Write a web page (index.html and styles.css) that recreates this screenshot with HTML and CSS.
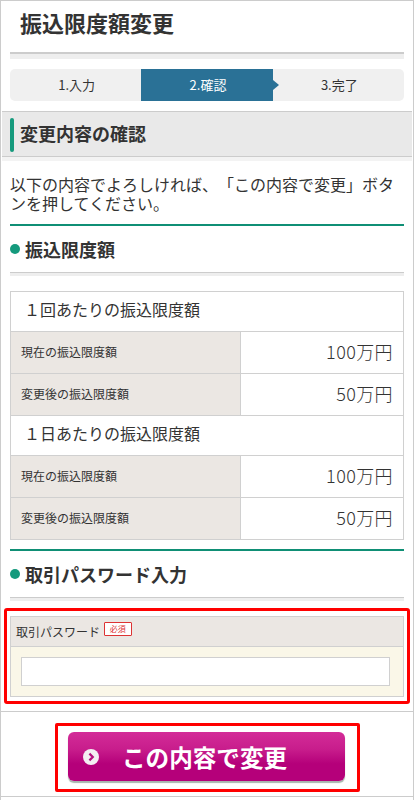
FILE: index.html
```html
<!DOCTYPE html>
<html lang="ja">

<head>
    <meta charset="UTF-8">
    <meta name="viewport" content="width=device-width, initial-scale=1.0">
    <title>振込限度額変更</title>
    <link rel="stylesheet" href="styles.css">
</head>

<body>
    <div class="cont">
        <h1 class="title">振込限度額変更</h1>
        <div class="rule rule-top"></div>

        <div class="steps">
            <div class="step">1.入力</div>
            <div class="step step-on">2.確認</div>
            <div class="step">3.完了</div>
        </div>

        <h2 class="band"><span class="band-bar"></span><span class="band-text">変更内容の確認</span></h2>

        <p class="lead">以下の内容でよろしければ、「この内容で変更」ボタンを押してください。</p>

        <div class="green"></div>
        <h3 class="head"><span class="dot"></span>振込限度額</h3>
        <div class="rule"></div>

        <div class="tabla">
            <div class="tabla-title">１回あたりの振込限度額</div>
            <div class="fila">
                <div class="tabla-label">現在の振込限度額</div>
                <div class="tabla-value">100万円</div>
            </div>
            <div class="fila">
                <div class="tabla-label">変更後の振込限度額</div>
                <div class="tabla-value">50万円</div>
            </div>
            <div class="tabla-title tabla-title-2">１日あたりの振込限度額</div>
            <div class="fila">
                <div class="tabla-label">現在の振込限度額</div>
                <div class="tabla-value">100万円</div>
            </div>
            <div class="fila">
                <div class="tabla-label">変更後の振込限度額</div>
                <div class="tabla-value">50万円</div>
            </div>
        </div>

        <div class="green green-2"></div>
        <h3 class="head"><span class="dot"></span>取引パスワード入力</h3>
        <div class="rule"></div>

        <div class="redbox">
            <div class="form">
                <div class="form-head">
                    <label for="pass">取引パスワード</label>
                    <span class="must">必須</span>
                </div>
                <div class="form-body">
                    <input id="pass" class="input" type="password">
                </div>
            </div>
        </div>

        <div class="foot">
            <div class="redbox-btn">
                <button class="boton">
                    <svg class="boton-icon" viewBox="0 0 16 16" width="16" height="16">
                        <circle cx="8" cy="8" r="8" fill="#f4eef2" />
                        <path d="M6.4 4.6 L9.8 8 L6.4 11.4" fill="none" stroke="#b5107f" stroke-width="2.2" />
                    </svg>
                    <span>この内容で変更</span>
                </button>
            </div>
        </div>
    </div>
</body>

</html>
```

FILE: styles.css
```css
* {
    box-sizing: border-box;
}

html,
body {
    margin: 0;
    height: 800px;
    overflow: hidden;
}

body {
    background: white;
    color: #333;
    font-family: "Noto Sans CJK JP", "Noto Sans", sans-serif;
    text-spacing-trim: space-all;
}

.cont {
    height: 800px;
    padding: 0 1px;
    border: 1px solid #ccc;
    border-bottom: 0;
}

.title {
    margin: 0 0 0 18px;
    height: 51px;
    padding-top: 7px;
    font-size: 22px;
    line-height: 28px;
    font-weight: bold;
}

.rule {
    margin: 0 8px;
    height: 4px;
    border-top: 1px solid #ccc;
    background: #eee;
}

.rule-top {
    height: 7px;
    border-top-width: 2px;
}

.steps {
    display: flex;
    height: 32px;
    margin: 10px 8px 0;
    background: #f0f0f0;
    border-radius: 5px;
}

.step {
    position: relative;
    flex: 1;
    padding-left: 2px;
    text-align: center;
    font-size: 13px;
    line-height: 31px;
}

.step-on {
    background: #2a7196;
    color: white;
}

.step-on::after {
    content: "";
    position: absolute;
    top: 11px;
    right: -6px;
    border-left: 6px solid #2a7196;
    border-top: 5px solid transparent;
    border-bottom: 5px solid transparent;
}

.band {
    display: flex;
    align-items: center;
    gap: 6px;
    margin: 10px 0 0;
    height: 50px;
    padding: 0 8px 0;
    background: #e9e9e9;
    border-top: 1px solid #ccc;
    border-bottom: 4px solid #f3f3f3;
    box-shadow: inset 0 -1px 0 #ccc;
    font-size: 18px;
    line-height: 36px;
    font-weight: bold;
}

.band-text {
    margin-bottom: 4px;
}

.band-bar {
    width: 4px;
    height: 34px;
    border-radius: 2px;
    background: #159a7d;
}

.lead {
    margin: 14px 8px 0;
    font-size: 16px;
    line-height: 19px;
}

.green {
    height: 2px;
    margin: 11px 8px 0;
    background: #0f8f75;
}

.green-2 {
    margin-top: 9px;
}

.head {
    display: flex;
    align-items: center;
    margin: 0 8px;
    height: 46px;
    font-size: 18px;
    line-height: 44px;
    font-weight: bold;
}

.dot {
    width: 10px;
    height: 10px;
    margin-right: 5px;
    border-radius: 50%;
    background: #159a7d;
}

.tabla {
    margin: 15px 8px 0;
    border: 1px solid #d0d0d0;
    border-bottom: 0;
}

.tabla-title {
    height: 40px;
    padding-left: 13px;
    border-bottom: 1px solid #d0d0d0;
    font-size: 16px;
    line-height: 35px;
}

.fila {
    display: flex;
    height: 42px;
    border-bottom: 1px solid #d0d0d0;
}

.tabla-label {
    width: 230px;
    padding-left: 10px;
    background: #ebe7e3;
    border-right: 1px solid #d0d0d0;
    font-size: 12px;
    line-height: 40px;
}

.tabla-value {
    flex: 1;
    padding-right: 10px;
    text-align: right;
    font-size: 18px;
    font-weight: 300;
    letter-spacing: 0.4px;
    line-height: 38px;
}

.redbox {
    margin: 7px 2px 0;
    padding: 5px 3px 4px;
    border: 3px solid red;
    border-radius: 3px;
}

.form {
    border: 1px solid #d0d0d0;
}

.form-head {
    height: 30px;
    padding-left: 5px;
    background: #ebe7e3;
    border-bottom: 1px solid #d0d0d0;
    font-size: 12px;
    line-height: 29px;
}

.must {
    display: inline-block;
    vertical-align: 5px;
    width: 28px;
    height: 14px;
    margin-left: 1px;
    background: white;
    border: 1px solid #d33;
    border-radius: 1px;
    color: #d33;
    font-size: 8px;
    line-height: 12px;
    text-align: center;
}

.form-body {
    padding: 10px 13px 10px 10px;
    background: #faf7e8;
}

.input {
    display: block;
    width: 100%;
    height: 29px;
    background: white;
    border: 1px solid #d0d0d0;
}

.foot {
    margin: 7px -1px 0;
    height: 86px;
    padding-top: 11px;
    border-top: 1px solid #ccc;
    border-bottom: 1px solid #ccc;
}

.redbox-btn {
    width: 305px;
    height: 69px;
    margin-left: 54px;
    padding: 6px 10px;
    border: 3px solid red;
    border-radius: 2px;
}

.boton {
    display: flex;
    align-items: center;
    width: 277px;
    height: 49px;
    padding: 0 0 0 15px;
    background: linear-gradient(#d32c98 0%, #c81d8c 35%, #b5007a 65%, #b5007a 100%);
    border: 0;
    border-radius: 6px;
    box-shadow: 0 2px 1px #a9b5ad;
    color: white;
    font-family: inherit;
    font-size: 23.6px;
    font-weight: bold;
}

.boton span {
    margin-left: 23px;
}
```
